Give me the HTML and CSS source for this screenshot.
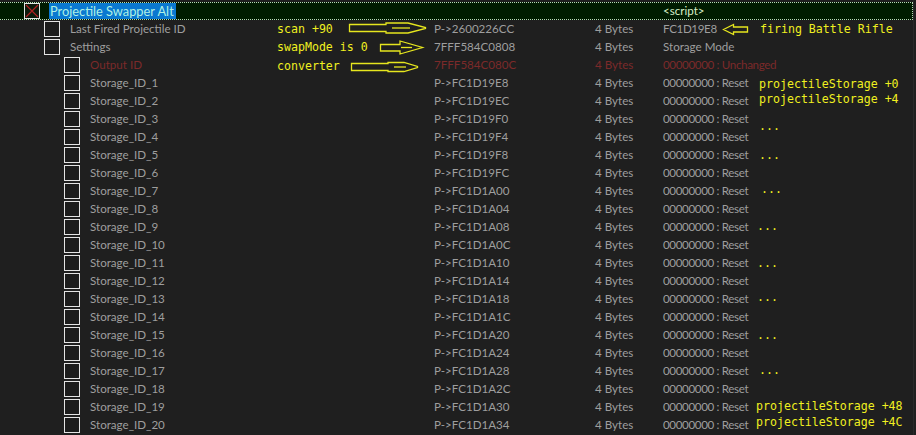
FILE: index.html
```html
<!DOCTYPE html>
<html>
<head>
<meta charset="utf-8">
<link rel="stylesheet" href="styles.css">
</head>
<body>
<div class="table">
  <div class="row sel">
    <div class="name lv0"><span class="box x"><svg width="14" height="14" viewBox="0 0 14 14"><path d="M1 1L13 13M13 1L1 13" stroke="#b02020" stroke-width="1.2"/></svg></span><span class="hl">Projectile Swapper Alt</span></div>
    <div class="addr"></div><div class="type"></div><div class="val script">&lt;script&gt;</div>
  </div>
  <div class="row"><div class="name lv1"><span class="box"></span><span>Last Fired Projectile ID</span></div><div class="addr">P-&gt;2600226CC</div><div class="type">4 Bytes</div><div class="val">FC1D19E8</div></div>
  <div class="row"><div class="name lv1"><span class="box"></span><span>Settings</span></div><div class="addr">7FFF584C0808</div><div class="type">4 Bytes</div><div class="val txt">Storage Mode</div></div>
  <div class="row red"><div class="name lv2"><span class="box"></span><span>Output ID</span></div><div class="addr">7FFF584C080C</div><div class="type">4 Bytes</div><div class="val">00000000 : Unchanged</div></div>
  <div class="row"><div class="name lv2"><span class="box"></span><span>Storage_ID_1</span></div><div class="addr">P-&gt;FC1D19E8</div><div class="type">4 Bytes</div><div class="val">00000000 : Reset</div></div>
  <div class="row"><div class="name lv2"><span class="box"></span><span>Storage_ID_2</span></div><div class="addr">P-&gt;FC1D19EC</div><div class="type">4 Bytes</div><div class="val">00000000 : Reset</div></div>
  <div class="row"><div class="name lv2"><span class="box"></span><span>Storage_ID_3</span></div><div class="addr">P-&gt;FC1D19F0</div><div class="type">4 Bytes</div><div class="val">00000000 : Reset</div></div>
  <div class="row"><div class="name lv2"><span class="box"></span><span>Storage_ID_4</span></div><div class="addr">P-&gt;FC1D19F4</div><div class="type">4 Bytes</div><div class="val">00000000 : Reset</div></div>
  <div class="row"><div class="name lv2"><span class="box"></span><span>Storage_ID_5</span></div><div class="addr">P-&gt;FC1D19F8</div><div class="type">4 Bytes</div><div class="val">00000000 : Reset</div></div>
  <div class="row"><div class="name lv2"><span class="box"></span><span>Storage_ID_6</span></div><div class="addr">P-&gt;FC1D19FC</div><div class="type">4 Bytes</div><div class="val">00000000 : Reset</div></div>
  <div class="row"><div class="name lv2"><span class="box"></span><span>Storage_ID_7</span></div><div class="addr">P-&gt;FC1D1A00</div><div class="type">4 Bytes</div><div class="val">00000000 : Reset</div></div>
  <div class="row"><div class="name lv2"><span class="box"></span><span>Storage_ID_8</span></div><div class="addr">P-&gt;FC1D1A04</div><div class="type">4 Bytes</div><div class="val">00000000 : Reset</div></div>
  <div class="row"><div class="name lv2"><span class="box"></span><span>Storage_ID_9</span></div><div class="addr">P-&gt;FC1D1A08</div><div class="type">4 Bytes</div><div class="val">00000000 : Reset</div></div>
  <div class="row"><div class="name lv2"><span class="box"></span><span>Storage_ID_10</span></div><div class="addr">P-&gt;FC1D1A0C</div><div class="type">4 Bytes</div><div class="val">00000000 : Reset</div></div>
  <div class="row"><div class="name lv2"><span class="box"></span><span>Storage_ID_11</span></div><div class="addr">P-&gt;FC1D1A10</div><div class="type">4 Bytes</div><div class="val">00000000 : Reset</div></div>
  <div class="row"><div class="name lv2"><span class="box"></span><span>Storage_ID_12</span></div><div class="addr">P-&gt;FC1D1A14</div><div class="type">4 Bytes</div><div class="val">00000000 : Reset</div></div>
  <div class="row"><div class="name lv2"><span class="box"></span><span>Storage_ID_13</span></div><div class="addr">P-&gt;FC1D1A18</div><div class="type">4 Bytes</div><div class="val">00000000 : Reset</div></div>
  <div class="row"><div class="name lv2"><span class="box"></span><span>Storage_ID_14</span></div><div class="addr">P-&gt;FC1D1A1C</div><div class="type">4 Bytes</div><div class="val">00000000 : Reset</div></div>
  <div class="row"><div class="name lv2"><span class="box"></span><span>Storage_ID_15</span></div><div class="addr">P-&gt;FC1D1A20</div><div class="type">4 Bytes</div><div class="val">00000000 : Reset</div></div>
  <div class="row"><div class="name lv2"><span class="box"></span><span>Storage_ID_16</span></div><div class="addr">P-&gt;FC1D1A24</div><div class="type">4 Bytes</div><div class="val">00000000 : Reset</div></div>
  <div class="row"><div class="name lv2"><span class="box"></span><span>Storage_ID_17</span></div><div class="addr">P-&gt;FC1D1A28</div><div class="type">4 Bytes</div><div class="val">00000000 : Reset</div></div>
  <div class="row"><div class="name lv2"><span class="box"></span><span>Storage_ID_18</span></div><div class="addr">P-&gt;FC1D1A2C</div><div class="type">4 Bytes</div><div class="val">00000000 : Reset</div></div>
  <div class="row"><div class="name lv2"><span class="box"></span><span>Storage_ID_19</span></div><div class="addr">P-&gt;FC1D1A30</div><div class="type">4 Bytes</div><div class="val">00000000 : Reset</div></div>
  <div class="row"><div class="name lv2"><span class="box"></span><span>Storage_ID_20</span></div><div class="addr">P-&gt;FC1D1A34</div><div class="type">4 Bytes</div><div class="val">00000000 : Reset</div></div>

  <div class="note n-scan">scan +90</div>
  <div class="note n-swap">swapMode is 0</div>
  <div class="note n-conv">converter</div>
  <div class="note n-fire">firing Battle Rifle</div>
  <div class="note n-ps0">projectileStorage +0</div>
  <div class="note n-ps4">projectileStorage +4</div>
  <div class="note n-ps48">projectileStorage +48</div>
  <div class="note n-ps4c">projectileStorage +4C</div>
  <div class="note dots d1">...</div>
  <div class="note dots d2">...</div>
  <div class="note dots d3">...</div>
  <div class="note dots d4">...</div>
  <div class="note dots d5">...</div>
  <div class="note dots d6">...</div>
  <div class="note dots d7">...</div>
  <div class="note dots d8">...</div>

  <svg class="arrows" width="916" height="435" viewBox="0 0 916 435">
    <g fill="none" stroke="#e6e61e" stroke-width="1.3" stroke-linejoin="miter">
      <path d="M349.5 24.5H386V23H408L425.5 27.5V28.5L408 33H386V31.5H349.5Z"/>
      <path d="M392 28H410"/>
      <path d="M380.5 44.5H400V41L422.5 47.5L400 54V51H380.5Z"/>
      <path d="M401 47.5H412"/>
      <path d="M351.5 63.5H388V62.5H404L417.5 66.5V67.5L404 71.5H388V70.5H351.5Z"/>
      <path d="M394 67H406"/>
      <path d="M723.5 29.5L733.5 24.5V27H747.5V32H733.5V34.5Z"/>
    </g>
  </svg>
</div>
</body>
</html>
```
FILE: styles.css
```css
html, body {
  margin: 0;
  padding: 0;
  background: #1f1f1f;
  width: 916px;
  height: 435px;
  overflow: hidden;
}
.table {
  position: relative;
  padding-top: 2px;
  width: 916px;
  height: 433px;
  font-family: Lato, "Liberation Sans", Arial, sans-serif;
  font-size: 11.6px;
  color: #9e9e9e;
}
.table::after {
  content: "";
  position: absolute;
  right: 2px;
  top: 0;
  bottom: 0;
  width: 1px;
  background: #2a2a2a;
}
.row {
  display: grid;
  grid-template-columns: 434px 161px 68px 1fr;
  height: 18px;
  line-height: 18px;
  white-space: nowrap;
}
.row.sel {
  box-sizing: border-box;
  width: 913px;
  background: #001c00;
  border: 1px dotted #b8d8b8;
  border-left: none;
  line-height: 16px;
}
.name {
  display: flex;
  align-items: center;
}
.lv0 { padding-left: 24px; }
.lv1 { padding-left: 44px; }
.lv2 { padding-left: 64px; }
.box {
  box-sizing: border-box;
  width: 16px;
  height: 16px;
  border: 1px solid #e4e4e4;
  background: #1c1c1c;
  margin-right: 10px;
  flex: none;
  display: flex;
  align-items: center;
  justify-content: center;
}
.box.x { margin-right: 9px; background: #0c1a0c; }
.hl {
  background: #0a78d0;
  color: #aef0e4;
  padding: 0 2px 0 1px;
  line-height: 16px;
  height: 16px;
  font-size: 12.8px;
}
.val { letter-spacing: -0.35px; }
.val.txt, .val.script { letter-spacing: 0; }
.val.script { color: #d8f0c8; }
.red { color: #7c2a2a; }
.note {
  position: absolute;
  font-family: "DejaVu Sans Mono", "Liberation Mono", monospace;
  font-size: 11.6px;
  color: #f0f020;
  line-height: 14px;
  white-space: nowrap;
}
.n-scan { left: 277px; top: 22px; }
.n-swap { left: 277px; top: 40px; }
.n-conv { left: 277px; top: 59px; }
.n-fire { left: 760px; top: 22px; }
.n-ps0 { left: 759px; top: 77px; }
.n-ps4 { left: 759px; top: 92px; }
.n-ps48 { left: 756px; top: 399px; }
.n-ps4c { left: 756px; top: 415px; }
.d1 { left: 759px; top: 119px; }
.d2 { left: 759px; top: 148px; }
.d3 { left: 761px; top: 182px; }
.d4 { left: 757px; top: 219px; }
.d5 { left: 757px; top: 256px; }
.d6 { left: 757px; top: 290px; }
.d7 { left: 757px; top: 328px; }
.d8 { left: 759px; top: 363px; }
.arrows {
  position: absolute;
  left: 0;
  top: 0;
  pointer-events: none;
}
```
